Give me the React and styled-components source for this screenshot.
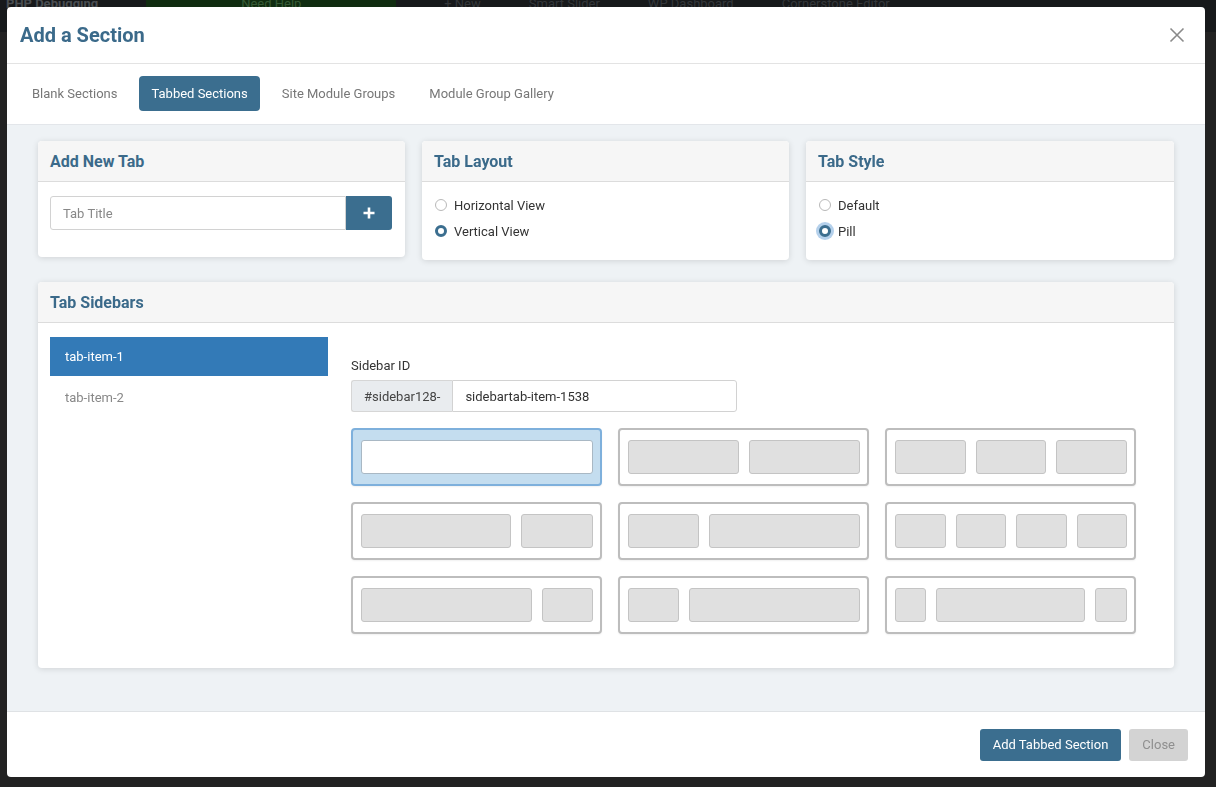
import React, { useState } from 'react';
import styled, { createGlobalStyle } from 'styled-components';

const GlobalStyle = createGlobalStyle`
  * { box-sizing: border-box; }
  html, body { margin: 0; padding: 0; }
  body {
    font-family: Roboto, "Liberation Sans", Arial, sans-serif;
    background: #222;
    width: 1216px;
    height: 787px;
    overflow: hidden;
  }
`;

const AdminBar = styled.div`
  display: flex;
  align-items: flex-start;
  gap: 48px;
  height: 32px;
  padding: 0 6px;
  background: #17191b;
  font-size: 13px;
  line-height: 8px;
`;

const BarItem = styled.span`
  color: ${(p) => (p.bold ? '#4a4e52' : '#34373a')};
  font-weight: ${(p) => (p.bold ? 700 : 400)};
  white-space: nowrap;
`;

const BarButton = styled.span`
  display: inline-block;
  width: 250px;
  height: 12px;
  background: #102c10;
  color: #365a36;
  text-align: center;
`;

const Modal = styled.div`
  position: fixed;
  top: 7px;
  left: 7px;
  width: 1198px;
  height: 770px;
  display: flex;
  flex-direction: column;
  background: #fff;
  border-radius: 4px;
  overflow: hidden;
`;

const Header = styled.div`
  display: flex;
  align-items: center;
  justify-content: space-between;
  height: 57px;
  padding: 0 20px 1px 13px;
  border-bottom: 1px solid #e3e3e3;
`;

const Title = styled.h2`
  margin: 0;
  font-size: 20px;
  font-weight: 700;
  color: #3b6a8a;
`;

const CloseX = styled.button`
  display: flex;
  padding: 0;
  border: none;
  background: none;
  cursor: pointer;
`;

const TabBar = styled.div`
  display: flex;
  align-items: center;
  gap: 10px;
  height: 61px;
  padding: 0 13px 1px;
  border-bottom: 1px solid #e3e6ea;
`;

const Tab = styled.button`
  height: 35px;
  padding: 0 12px;
  border: none;
  border-radius: 4px;
  font-family: inherit;
  font-size: 13px;
  background: ${(p) => (p.active ? '#3b6e8f' : 'transparent')};
  color: ${(p) => (p.active ? '#fff' : '#777')};
  cursor: pointer;
`;

const Body = styled.div`
  flex: 1;
  padding: 16px 31px 0;
  background: #eef2f5;
`;

const TopRow = styled.div`
  display: grid;
  grid-template-columns: 367px 367px 368px;
  gap: 17px;
  align-items: start;
  margin-bottom: 22px;
`;

const Card = styled.div`
  background: #fff;
  border-radius: 4px;
  box-shadow: 0 1px 6px rgba(0, 0, 0, 0.13);
  overflow: hidden;
`;

const CardHeader = styled.div`
  display: flex;
  align-items: center;
  height: 41px;
  padding: 0 12px;
  background: #f6f6f6;
  border-bottom: 1px solid #dcdcdc;
`;

const CardTitle = styled.h3`
  margin: 0;
  font-size: 16px;
  font-weight: 700;
  color: #3b6a8a;
`;

const CardBody = styled.div`
  padding: ${(p) => p.pad || '14px 12px'};
`;

const InputGroup = styled.div`
  display: flex;
  height: ${(p) => p.h || 34}px;
  width: ${(p) => p.w || 'auto'};
`;

const TextInput = styled.input`
  flex: 1;
  min-width: 0;
  padding: 0 12px;
  border: 1px solid #d2d2d2;
  border-radius: ${(p) => p.radius || '3px 0 0 3px'};
  font-family: inherit;
  font-size: 13px;
  color: #333;
  outline: none;
  &::placeholder { color: #888; }
`;

const AddonText = styled.span`
  display: flex;
  align-items: center;
  padding: 0 12px;
  background: #e9ecef;
  border: 1px solid #d6d6d6;
  border-right: none;
  border-radius: 3px 0 0 3px;
  font-size: 13px;
  color: #444;
`;

const PlusButton = styled.button`
  display: flex;
  align-items: center;
  justify-content: center;
  width: 46px;
  border: none;
  border-radius: 0 3px 3px 0;
  background: #3b6e8f;
  cursor: pointer;
`;

const RadioList = styled.div`
  display: flex;
  flex-direction: column;
`;

const RadioRow = styled.label`
  display: flex;
  align-items: center;
  gap: 7px;
  height: 26px;
  font-size: 13px;
  color: #333;
  cursor: pointer;
`;

const RadioDot = styled.span`
  width: 12px;
  height: 12px;
  border-radius: 50%;
  flex-shrink: 0;
  border: ${(p) => (p.checked ? '3.5px solid #3b6e8f' : '1px solid #b8b8b8')};
  background: #fff;
  box-shadow: ${(p) => (p.focus ? '0 0 0 3px rgba(88, 150, 210, 0.45)' : 'none')};
`;

const SidebarBody = styled.div`
  display: flex;
  gap: 23px;
  padding: 14px 12px 34px;
`;

const SideList = styled.div`
  width: 278px;
  flex-shrink: 0;
  display: flex;
  flex-direction: column;
`;

const SideItem = styled.div`
  display: flex;
  align-items: center;
  height: ${(p) => (p.active ? 39 : 42)}px;
  padding: 0 15px;
  font-size: 13px;
  background: ${(p) => (p.active ? '#337ab7' : 'transparent')};
  color: ${(p) => (p.active ? '#fff' : '#888')};
`;

const SidePane = styled.div`
  flex: 1;
  padding-top: 21px;
`;

const FieldLabel = styled.div`
  font-size: 13px;
  line-height: 16px;
  color: #333;
  margin-bottom: 6px;
`;

const LayoutGrid = styled.div`
  display: grid;
  grid-template-columns: repeat(3, 251px);
  column-gap: 16px;
  row-gap: 16px;
  margin-top: 16px;
`;

const LayoutBox = styled.div`
  display: flex;
  gap: 10px;
  height: 58px;
  padding: 10px 7px 10px 8px;
  border: 2px solid ${(p) => (p.selected ? '#7eb0dc' : '#bdbdbd')};
  border-radius: 4px;
  background: ${(p) => (p.selected ? '#c4ddef' : '#fff')};
  box-shadow: 0 1px 2px rgba(0, 0, 0, 0.06);
  cursor: pointer;
`;

const Block = styled.div`
  height: 34px;
  border: 1px solid ${(p) => (p.white ? '#a9b8c4' : '#c4c4c4')};
  border-radius: 3px;
  background: ${(p) => (p.white ? '#fff' : '#e0e0e0')};
`;

const Footer = styled.div`
  display: flex;
  align-items: center;
  justify-content: flex-end;
  gap: 8px;
  height: 66px;
  padding: 0 17px;
  border-top: 1px solid #dfe2e5;
`;

const FooterButton = styled.button`
  height: 32px;
  padding: 0 13px;
  border: none;
  border-radius: 3px;
  font-family: inherit;
  font-size: 13px;
  background: ${(p) => (p.muted ? '#d3d3d3' : '#3b6e8f')};
  color: ${(p) => (p.muted ? '#8f8f8f' : '#fff')};
  cursor: pointer;
`;

const layouts = [
  [[1]],
  [[1], [1]],
  [[1], [1], [1]],
  [[151], [71]],
  [[70], [151]],
  [[1], [1], [1], [1]],
  [[172], [50]],
  [[50], [171]],
  [[30], [151], [31]],
];

const App = () => {
  const [tab, setTab] = useState('Tabbed Sections');
  const [layout, setLayout] = useState('Vertical View');
  const [style, setStyle] = useState('Pill');
  const [picked, setPicked] = useState(0);
  const [active, setActive] = useState(0);

  const tabs = ['Blank Sections', 'Tabbed Sections', 'Site Module Groups', 'Module Group Gallery'];

  return (
    <>
      <GlobalStyle />
      <AdminBar>
        <BarItem bold>PHP Debugging</BarItem>
        <BarButton>Need Help</BarButton>
        <BarItem>+ New</BarItem>
        <BarItem>Smart Slider</BarItem>
        <BarItem>WP Dashboard</BarItem>
        <BarItem>Cornerstone Editor</BarItem>
      </AdminBar>
      <Modal>
        <Header>
          <Title>Add a Section</Title>
          <CloseX aria-label="Close">
            <svg width="16" height="16" viewBox="0 0 16 16">
              <path d="M1.5 1.5 L14.5 14.5 M14.5 1.5 L1.5 14.5" stroke="#8a8a8a" strokeWidth="1.6" fill="none" />
            </svg>
          </CloseX>
        </Header>
        <TabBar>
          {tabs.map((t) => (
            <Tab key={t} active={t === tab} onClick={() => setTab(t)}>
              {t}
            </Tab>
          ))}
        </TabBar>
        <Body>
          <TopRow>
            <Card>
              <CardHeader>
                <CardTitle>Add New Tab</CardTitle>
              </CardHeader>
              <CardBody pad="14px 13px 27px 12px">
                <InputGroup>
                  <TextInput placeholder="Tab Title" />
                  <PlusButton aria-label="Add tab">
                    <svg width="12" height="12" viewBox="0 0 12 12">
                      <path d="M6 0.5 V11.5 M0.5 6 H11.5" stroke="#fff" strokeWidth="2.6" />
                    </svg>
                  </PlusButton>
                </InputGroup>
              </CardBody>
            </Card>
            <Card>
              <CardHeader>
                <CardTitle>Tab Layout</CardTitle>
              </CardHeader>
              <CardBody pad="10px 13px 16px">
                <RadioList>
                  {['Horizontal View', 'Vertical View'].map((v) => (
                    <RadioRow key={v} onClick={() => setLayout(v)}>
                      <RadioDot checked={layout === v} />
                      {v}
                    </RadioRow>
                  ))}
                </RadioList>
              </CardBody>
            </Card>
            <Card>
              <CardHeader>
                <CardTitle>Tab Style</CardTitle>
              </CardHeader>
              <CardBody pad="10px 13px 16px">
                <RadioList>
                  {['Default', 'Pill'].map((v) => (
                    <RadioRow key={v} onClick={() => setStyle(v)}>
                      <RadioDot checked={style === v} focus={v === 'Pill' && style === v} />
                      {v}
                    </RadioRow>
                  ))}
                </RadioList>
              </CardBody>
            </Card>
          </TopRow>

          <Card>
            <CardHeader>
              <CardTitle>Tab Sidebars</CardTitle>
            </CardHeader>
            <SidebarBody>
              <SideList>
                {['tab-item-1', 'tab-item-2'].map((s, i) => (
                  <SideItem key={s} active={active === i} onClick={() => setActive(i)}>
                    {s}
                  </SideItem>
                ))}
              </SideList>
              <SidePane>
                <FieldLabel>Sidebar ID</FieldLabel>
                <InputGroup h={32} w="386px">
                  <AddonText>#sidebar128-</AddonText>
                  <TextInput radius="0 3px 3px 0" defaultValue="sidebartab-item-1538" />
                </InputGroup>
                <LayoutGrid>
                  {layouts.map((cols, i) => (
                    <LayoutBox key={i} selected={picked === i} onClick={() => setPicked(i)}>
                      {cols.map(([w], j) => (
                        <Block key={j} white={picked === i} style={{ flex: w }} />
                      ))}
                    </LayoutBox>
                  ))}
                </LayoutGrid>
              </SidePane>
            </SidebarBody>
          </Card>
        </Body>
        <Footer>
          <FooterButton>Add Tabbed Section</FooterButton>
          <FooterButton muted>Close</FooterButton>
        </Footer>
      </Modal>
    </>
  );
};

export default App;
